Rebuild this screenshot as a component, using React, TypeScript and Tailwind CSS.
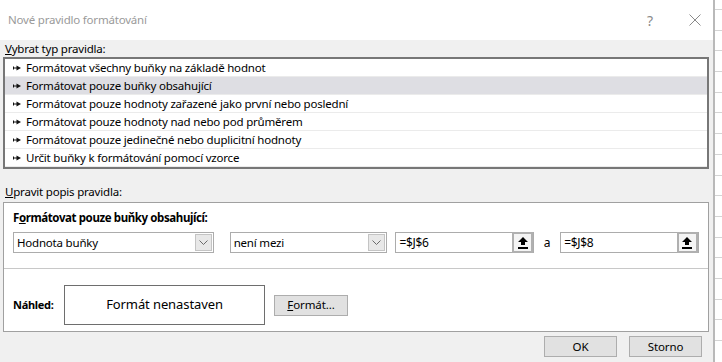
import React from 'react';

const rules = [
  'Formátovat všechny buňky na základě hodnot',
  'Formátovat pouze buňky obsahující',
  'Formátovat pouze hodnoty zařazené jako první nebo poslední',
  'Formátovat pouze hodnoty nad nebo pod průměrem',
  'Formátovat pouze jedinečné nebo duplicitní hodnoty',
  'Určit buňky k formátování pomocí vzorce',
];

const Bullet = () => (
  <svg width="8" height="6" viewBox="0 0 8 6" className="shrink-0">
    <rect x="0" y="1.5" width="1" height="3" fill="#111" />
    <rect x="0" y="2.5" width="4" height="1" fill="#111" />
    <polygon points="3.5,0.5 8,3 3.5,5.5" fill="#111" />
  </svg>
);

const Chevron = () => (
  <svg width="9" height="5" viewBox="0 0 9 5">
    <polyline points="0.5,0.5 4.5,4.5 8.5,0.5" fill="none" stroke="#6b6b6b" strokeWidth="1" />
  </svg>
);

const UploadIcon = () => (
  <svg width="10" height="12" viewBox="0 0 10 12">
    <polygon points="5,0 10,5 7,5 7,8 3,8 3,5 0,5" fill="#000" />
    <rect x="0" y="10" width="10" height="2" fill="#000" />
  </svg>
);

const Select = ({ label, width }: { label: string; width: string }) => (
  <div className={`flex h-[21px] items-center border border-[#acacac] bg-white ${width}`}>
    <span className="flex-1 pl-[3px] text-[11.5px] tracking-[-0.2px] text-black">{label}</span>
    <div className="mr-[1px] flex h-[17px] w-[17px] items-center justify-center border border-[#c4c4c4] bg-[#e8e8e8]">
      <Chevron />
    </div>
  </div>
);

const RefInput = ({ value }: { value: string }) => (
  <div className="flex h-[21px] w-[139px] items-center border border-[#acacac] bg-white">
    <span className="flex-1 pl-[3px] text-[12px] tracking-[-0.3px] text-black">{value}</span>
    <div className="flex h-[21px] w-[21px] items-center justify-center border-2 border-[#b0b0b0] bg-[#f4f4f4]">
      <UploadIcon />
    </div>
  </div>
);

const Button = ({ children, width }: { children: React.ReactNode; width: string }) => (
  <div
    className={`flex h-[21px] items-center justify-center border border-[#adadad] bg-[#e1e1e1] text-[11.5px] tracking-[-0.1px] text-black ${width}`}
  >
    {children}
  </div>
);

export default function App() {
  return (
    <div className="flex h-[362px] w-[722px] overflow-hidden bg-white [font-family:'Noto_Sans',sans-serif]">
      <div className="flex w-[715px] shrink-0 flex-col border-r-2 border-[#b9b9b9] bg-[#f0f0f0]">
        {/* title bar */}
        <div className="flex h-[40px] items-center bg-white pl-[8px] pr-[12px]">
          <span className="flex-1 text-[11.5px] tracking-[-0.2px] text-[#9a9a9a]">Nové pravidlo formátování</span>
          <span className="mr-[36px] text-[14px] text-[#8a8a8a]">?</span>
          <svg width="12" height="12" viewBox="0 0 12 12">
            <path d="M0.5 0.5 L11.5 11.5 M11.5 0.5 L0.5 11.5" stroke="#8a8a8a" strokeWidth="1" />
          </svg>
        </div>

        <div className="pl-[5px] text-[11.5px] leading-[17px] tracking-[-0.2px] text-black">
          <span className="underline">V</span>ybrat typ pravidla:
        </div>

        <div className="ml-[3px] w-[706px] border-2 border-[#777] bg-white">
          {rules.map((r, i) => (
            <div
              key={r}
              className={`flex h-[18px] items-center gap-[5px] border-b border-[#ebebeb] pl-[8px] text-[11.5px] tracking-[-0.2px] text-black ${
                i === 1 ? 'bg-[#dedee3]' : ''
              }`}
            >
              <Bullet />
              <span>{r}</span>
            </div>
          ))}
        </div>

        <div className="mt-[14px] pl-[5px] text-[11.5px] leading-[17px] tracking-[-0.2px] text-black">
          <span className="underline">U</span>pravit popis pravidla:
        </div>

        <div className="ml-[3px] mt-[2px] flex h-[130px] w-[706px] flex-col border border-[#a0a0a0] bg-white">
          <div className="px-[9px] pt-[6px]">
            <div className="text-[11.5px] font-bold leading-[17px] tracking-[-0.4px] text-black">
              F<span className="underline">o</span>rmátovat pouze buňky obsahující:
            </div>
            <div className="mt-[6px] flex items-center">
              <Select label="Hodnota buňky" width="w-[201px]" />
              <div className="w-[16px]" />
              <Select label="není mezi" width="w-[158px]" />
              <div className="w-[8px]" />
              <RefInput value="=$J$6" />
              <span className="w-[26px] text-center text-[12px] text-black">a</span>
              <RefInput value="=$J$8" />
            </div>
          </div>
          <div className="mt-[15px] h-px bg-[#c8c8c8]" />
          <div className="flex items-center pl-[9px] pt-[16px]">
            <span className="w-[51px] text-[11px] font-bold tracking-[-0.3px] text-black">Náhled:</span>
            <div className="flex h-[40px] w-[201px] items-center justify-center border border-[#6e6e6e] text-[13px] tracking-[-0.1px] text-black">
              Formát nenastaven
            </div>
            <div className="w-[9px]" />
            <Button width="w-[74px]">
              <span>
                <span className="underline">F</span>ormát...
              </span>
            </Button>
          </div>
        </div>

        <div className="mt-[4px] flex justify-end gap-[12px] pr-[11px]">
          <Button width="w-[73px]">OK</Button>
          <Button width="w-[73px]">Storno</Button>
        </div>
      </div>

      {/* worksheet behind the dialog */}
      <div className="flex flex-1 flex-col pt-[9px]">
        {Array.from({ length: 17 }).map((_, i) => (
          <div key={i} className="h-[20.7px] shrink-0 border-t border-[#d4d4d4]" />
        ))}
      </div>
    </div>
  );
}
